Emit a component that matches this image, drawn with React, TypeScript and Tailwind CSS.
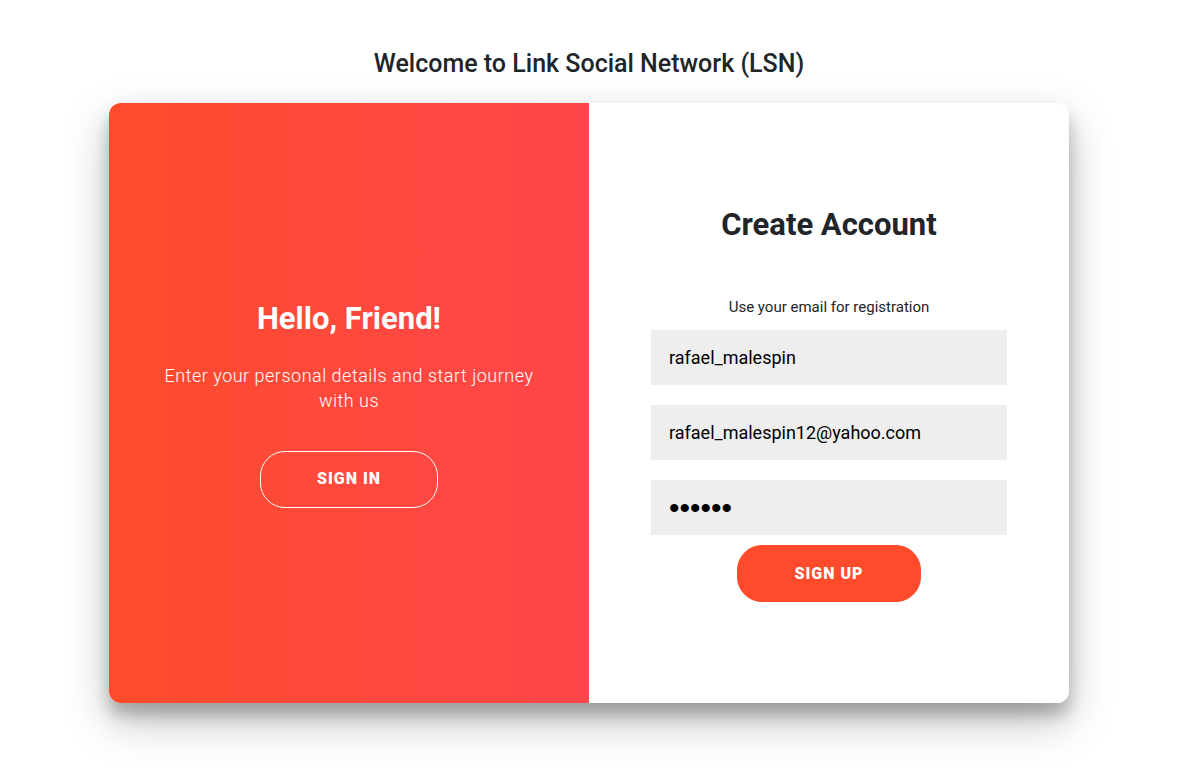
const field =
  "h-[55px] w-full bg-[#eeeeee] px-[18px] text-black outline-none";
const pill =
  "h-[57px] rounded-[25px] border px-14 text-base font-black uppercase tracking-[1px] text-white";

function Welcome() {
  return (
    <section className="flex w-1/2 flex-col items-center justify-center bg-linear-to-r from-[#ff4b2b] to-[#ff464a] px-[50px] text-center text-white">
      <h2 className="text-[31px] leading-10 font-bold">Hello, Friend!</h2>
      <p className="mt-6 mb-[38px] text-lg leading-[25px] font-light tracking-[0.5px]">
        Enter your personal details and start journey with us
      </p>
      <button type="button" className={`${pill} border-white`}>
        Sign In
      </button>
    </section>
  );
}

function Registration() {
  return (
    <form
      className="flex w-1/2 flex-col items-center justify-center bg-white px-[62px] pt-px text-center"
      onSubmit={(event) => event.preventDefault()}
    >
      <h2 className="text-[31px] leading-10 font-bold">Create Account</h2>
      <p className="mt-[49px] mb-[10px] text-[15px] leading-[26px]">
        Use your email for registration
      </p>
      <div className="flex w-full flex-col gap-5">
        <input aria-label="Name" type="text" defaultValue="rafael_malespin" className={`${field} text-lg`} />
        <input aria-label="Email" type="email" defaultValue="rafael_malespin12@yahoo.com" className={`${field} text-lg`} />
        <input
          aria-label="Password"
          type="password"
          defaultValue="secret"
          className={`${field} font-['Liberation_Sans',sans-serif] text-[30px]`}
        />
      </div>
      <button type="submit" className={`${pill} mt-[10px] border-[#ff4b2b] bg-[#ff4b2b]`}>
        Sign Up
      </button>
    </form>
  );
}

export default function App() {
  return (
    <div className="min-h-screen overflow-hidden bg-white pr-[13px] font-[Roboto,sans-serif] text-[#212529]">
      <h1 className="mt-12 mb-6 text-center text-[25px] leading-[31px] font-medium">
        Welcome to Link Social Network (LSN)
      </h1>
      <main className="mx-auto flex min-h-[600px] w-full max-w-[960px] overflow-hidden rounded-xl shadow-[0_18px_44px_rgba(0,0,0,0.25),0_12px_15px_rgba(0,0,0,0.22)]">
        <Welcome />
        <Registration />
      </main>
    </div>
  );
}
